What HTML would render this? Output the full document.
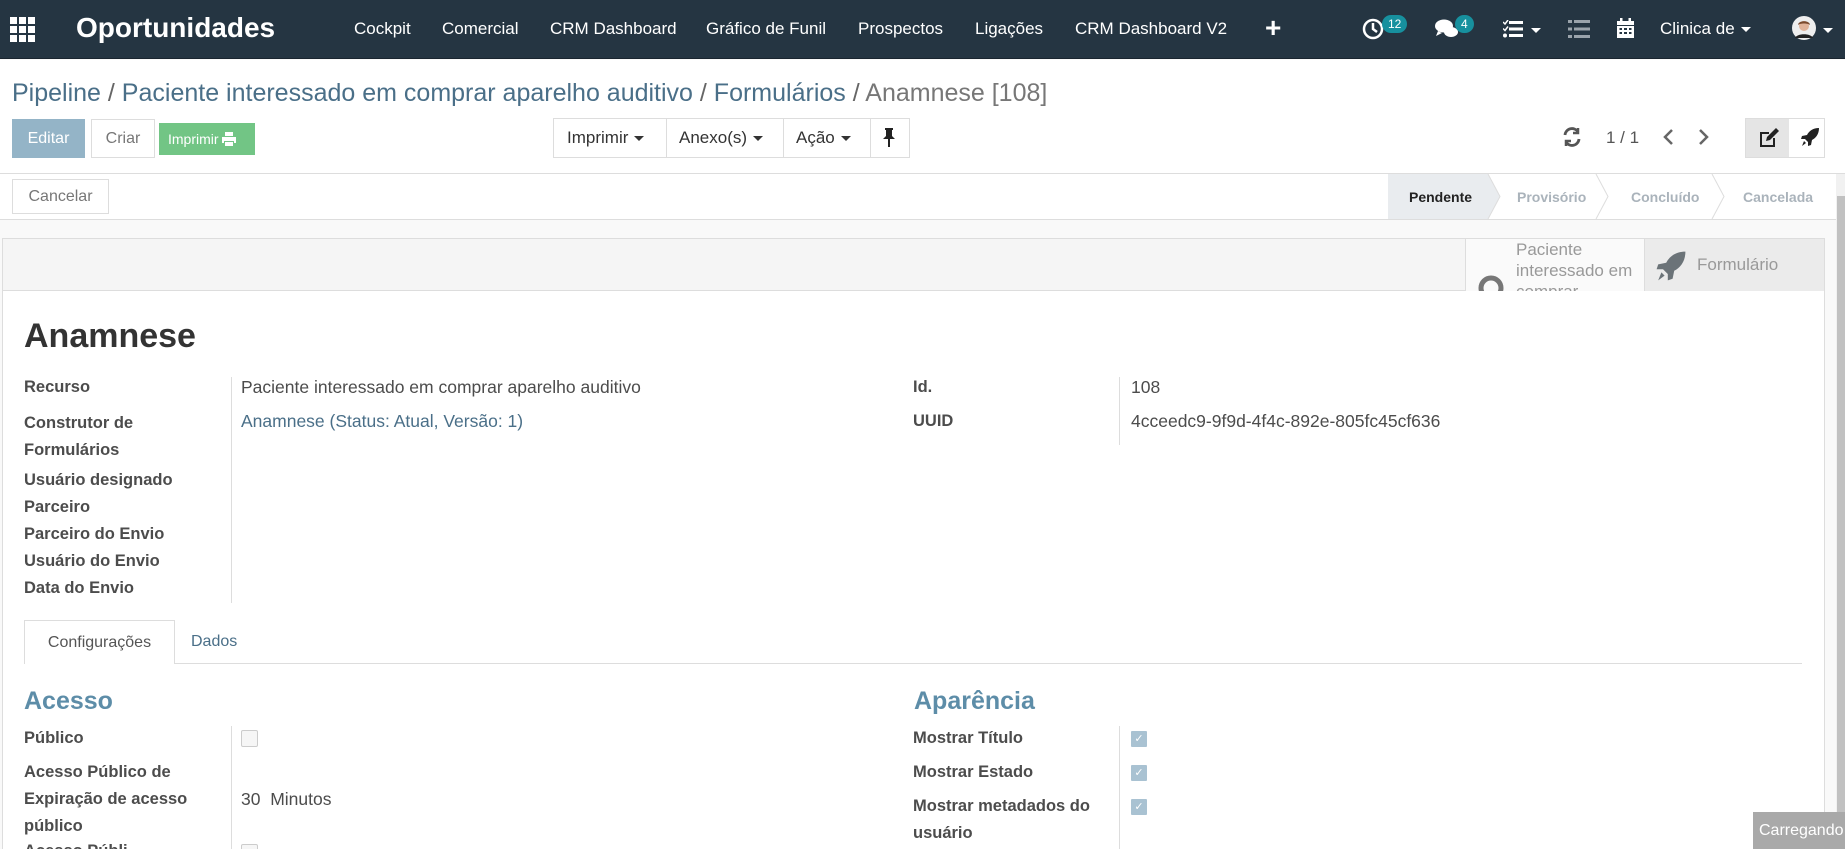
<!DOCTYPE html>
<html><head><meta charset="utf-8"><style>
*{box-sizing:border-box;margin:0;padding:0}
html{width:1845px;height:849px;overflow:hidden}
body{width:1845px;height:849px;overflow:hidden;background:#f9f9f9;font-family:"Liberation Sans",sans-serif;color:#4c4c4c;position:relative}
.a{position:absolute;white-space:nowrap}
.nav{position:absolute;left:0;top:0;width:1845px;height:59px;background:#253542;border-bottom:1px solid #1a252f}
.nav .m{position:absolute;top:19px;color:#fff;font-size:17px}
.badge{position:absolute;background:#17909e;color:#fff;font-size:12px;border-radius:9px;padding:2px 6px;line-height:14px}
.caret{display:inline-block;width:0;height:0;border-left:5px solid transparent;border-right:5px solid transparent;border-top:5px solid currentColor;vertical-align:middle;margin-left:6px}
.lbl{position:absolute;font-weight:bold;font-size:16.5px;color:#4c4c4c;white-space:nowrap}
.val{position:absolute;font-size:17.5px;color:#4c4c4c;white-space:nowrap}
.cb{position:absolute;width:17px;height:17px;border:1px solid #ccc;background:#f6f6f6;border-radius:2px}
.cbc{position:absolute;width:16px;height:16px;background:#a9c2d2;border-radius:1px;color:#fff;font-size:11px;text-align:center;line-height:16px}
</style></head><body>

<div class="nav">
  <svg class="a" style="left:10px;top:17px" width="25" height="25" viewBox="0 0 25 25" fill="#fff">
    <rect x="0" y="0" width="7" height="7"/><rect x="9" y="0" width="7" height="7"/><rect x="18" y="0" width="7" height="7"/>
    <rect x="0" y="9" width="7" height="7"/><rect x="9" y="9" width="7" height="7"/><rect x="18" y="9" width="7" height="7"/>
    <rect x="0" y="18" width="7" height="7"/><rect x="9" y="18" width="7" height="7"/><rect x="18" y="18" width="7" height="7"/>
  </svg>
  <div class="a" style="left:76px;top:12px;color:#fff;font-size:28px;font-weight:bold">Oportunidades</div>
  <div class="m" style="left:354px">Cockpit</div>
  <div class="m" style="left:442px">Comercial</div>
  <div class="m" style="left:550px">CRM Dashboard</div>
  <div class="m" style="left:706px">Gráfico de Funil</div>
  <div class="m" style="left:858px">Prospectos</div>
  <div class="m" style="left:975px">Ligações</div>
  <div class="m" style="left:1075px">CRM Dashboard V2</div>
  <div class="a" style="left:1265px;top:12px;color:#fff;font-size:28px;font-weight:bold">+</div>
  <svg class="a" style="left:1362px;top:18px" width="22" height="22" viewBox="0 0 22 22"><circle cx="11" cy="11" r="9" fill="none" stroke="#fff" stroke-width="2.5"/><path d="M11 5v6l4 3" stroke="#fff" stroke-width="2.5" fill="none"/></svg>
  <div class="badge" style="left:1382px;top:15px">12</div>
  <svg class="a" style="left:1434px;top:18px" width="26" height="22" viewBox="0 0 26 22" fill="#fff"><ellipse cx="10" cy="8" rx="9" ry="6.5"/><path d="M4 13l-2 5 6-3z"/><ellipse cx="17" cy="14" rx="7" ry="5"/></svg>
  <div class="badge" style="left:1455px;top:15px">4</div>
  <svg class="a" style="left:1503px;top:20px" width="20" height="18" viewBox="0 0 20 18" fill="#fff"><rect x="6" y="1" width="14" height="3"/><rect x="6" y="7.5" width="14" height="3"/><rect x="6" y="14" width="14" height="3"/><circle cx="2" cy="15.5" r="2"/><path d="M0 2l2 2 3-4" stroke="#fff" stroke-width="1.5" fill="none"/><path d="M0 8.5l2 2 3-4" stroke="#fff" stroke-width="1.5" fill="none"/></svg>
  <div class="a" style="left:1525px;top:22px;color:#fff"><span class="caret"></span></div>
  <svg class="a" style="left:1568px;top:19px" width="22" height="20" viewBox="0 0 22 20" fill="#9aa3ab"><rect x="0" y="1" width="4" height="3"/><rect x="6" y="1" width="16" height="3"/><rect x="0" y="8.5" width="4" height="3"/><rect x="6" y="8.5" width="16" height="3"/><rect x="0" y="16" width="4" height="3"/><rect x="6" y="16" width="16" height="3"/></svg>
  <svg class="a" style="left:1617px;top:18px" width="17" height="20" viewBox="0 0 17 20" fill="#fff"><rect x="3" y="0" width="2.5" height="4"/><rect x="11.5" y="0" width="2.5" height="4"/><rect x="0" y="3" width="17" height="4"/><path d="M0 8h17v12H0z M2.5 10v2h2.5v-2z M7 10v2h3v-2z M12 10v2h2.5v-2z M2.5 14v2h2.5v-2z M7 14v2h3v-2z M12 14v2h2.5v-2z" fill-rule="evenodd"/></svg>
  <div class="m" style="left:1660px">Clinica de<span class="caret"></span></div>
  <svg class="a" style="left:1792px;top:16px" width="24" height="24" viewBox="0 0 24 24"><circle cx="12" cy="12" r="12" fill="#eee"/><circle cx="12" cy="10" r="5" fill="#e0b39a"/><path d="M6 9c0-5 12-5 12 0-2-2-10-2-12 0z" fill="#7a4a2e"/><path d="M3 22c2-5 16-5 18 0" fill="#222"/></svg>
  <div class="a" style="left:1823px;top:22px;color:#fff"><span class="caret" style="margin-left:0"></span></div>
</div>

<div class="a" style="left:0;top:60px;width:1845px;height:114px;background:#fff;border-bottom:1px solid #ddd"></div>
<div class="a" style="left:12px;top:79px;font-size:25px;color:#4a6f88">Pipeline <span style="color:#666">/</span> Paciente interessado em comprar aparelho auditivo <span style="color:#666">/</span> Formulários <span style="color:#666">/</span> <span style="color:#777">Anamnese [108]</span></div>
<div class="a" style="left:12px;top:119px;width:73px;height:39px;background:#94b4c7;color:#fff;font-size:16px;line-height:39px;text-align:center">Editar</div>
<div class="a" style="left:91px;top:119px;width:64px;height:39px;background:#fff;border:1px solid #ddd;color:#777;font-size:16px;line-height:37px;text-align:center">Criar</div>
<div class="a" style="left:159px;top:123px;width:96px;height:32px;background:#72c585;color:#fff;font-size:14px;line-height:32px;padding-left:9px">Imprimir <svg style="vertical-align:-2px" width="14" height="14" viewBox="0 0 14 14" fill="#fff"><rect x="3" y="0" width="8" height="4"/><path d="M0 5h14v6h-2v-2H2v2H0z"/><rect x="3" y="10" width="8" height="4"/></svg></div>

<div class="a" style="left:553px;top:118px;width:357px;height:40px;background:#fff;border:1px solid #ddd"></div>
<div class="a" style="left:666px;top:118px;width:1px;height:40px;background:#ddd"></div>
<div class="a" style="left:783px;top:118px;width:1px;height:40px;background:#ddd"></div>
<div class="a" style="left:870px;top:118px;width:1px;height:40px;background:#ddd"></div>
<div class="a" style="left:567px;top:128px;font-size:17px;color:#333">Imprimir<span class="caret"></span></div>
<div class="a" style="left:679px;top:128px;font-size:17px;color:#333">Anexo(s)<span class="caret"></span></div>
<div class="a" style="left:796px;top:128px;font-size:17px;color:#333">Ação<span class="caret"></span></div>
<svg class="a" style="left:882px;top:128px" width="14" height="19" viewBox="0 0 14 19" fill="#222"><rect x="3" y="0" width="8" height="2"/><path d="M4 2h6v6l3 3H1l3-3z"/><rect x="6" y="11" width="2" height="8"/></svg>

<svg class="a" style="left:1562px;top:126px" width="20" height="22" viewBox="0 0 20 22" fill="none" stroke="#555" stroke-width="2.8"><path d="M3 9a7 7 0 0 1 13-3"/><path d="M17 13a7 7 0 0 1-13 3"/><path d="M16 2v5h-5" stroke-width="2.5"/><path d="M4 20v-5h5" stroke-width="2.5"/></svg>
<div class="a" style="left:1606px;top:128px;font-size:17px;color:#555">1 / 1</div>
<svg class="a" style="left:1662px;top:128px" width="12" height="18" viewBox="0 0 12 18" fill="none" stroke="#666" stroke-width="2.5"><path d="M10 2L3 9l7 7"/></svg>
<svg class="a" style="left:1698px;top:128px" width="12" height="18" viewBox="0 0 12 18" fill="none" stroke="#666" stroke-width="2.5"><path d="M2 2l7 7-7 7"/></svg>
<div class="a" style="left:1745px;top:118px;width:80px;height:40px;border:1px solid #ddd;background:#fff"></div>
<div class="a" style="left:1746px;top:119px;width:43px;height:38px;background:#e5e5e5"></div>
<svg class="a" style="left:1758px;top:127px" width="22" height="22" viewBox="0 0 22 22"><path d="M2 5h9v2H4v11h11v-7h2v9H2z" fill="#222"/><path d="M8 14l1-4 9-9 3 3-9 9z" fill="#222"/></svg>
<svg class="a" style="left:1800px;top:127px" width="20" height="20" viewBox="0 0 20 20" fill="#222"><path d="M19 1c-6 0-10 3-12 7l-5 1 -1 3 4 0 3 3 0 4 3-1 1-5c4-2 7-6 7-12z"/><path d="M4 14l2 2-4 3z"/></svg>

<div class="a" style="left:0;top:174px;width:1836px;height:46px;background:#fff;border-bottom:1px solid #ddd"></div>
<div class="a" style="left:12px;top:179px;width:97px;height:35px;border:1px solid #ddd;color:#777;font-size:16px;line-height:33px;text-align:center;background:#fff">Cancelar</div>
<svg class="a" style="left:1388px;top:174px" width="448" height="45" viewBox="0 0 448 45">
  <path d="M0 0H100L112 22.5L100 45H0z" fill="#e9ecef"/>
  <path d="M208 0l12 22.5L208 45" fill="none" stroke="#ddd"/>
  <path d="M324 0l12 22.5L324 45" fill="none" stroke="#ddd"/>
  <path d="M100 0l12 22.5L100 45" fill="none" stroke="#ddd"/>
</svg>
<div class="a" style="left:1409px;top:189px;font-size:14px;font-weight:bold;color:#222">Pendente</div>
<div class="a" style="left:1517px;top:189px;font-size:14px;font-weight:bold;color:#aab3bb">Provisório</div>
<div class="a" style="left:1631px;top:189px;font-size:14px;font-weight:bold;color:#aab3bb">Concluído</div>
<div class="a" style="left:1743px;top:189px;font-size:14px;font-weight:bold;color:#aab3bb">Cancelada</div>

<div class="a" style="left:1836px;top:174px;width:9px;height:675px;background:#f1f1f1"></div>
<div class="a" style="left:1837px;top:196px;width:8px;height:653px;background:#c1c1c1"></div>

<div class="a" style="left:2px;top:238px;width:1823px;height:611px;background:#fff;border:1px solid #ddd;border-bottom:none"></div>
<div class="a" style="left:3px;top:239px;width:1821px;height:52px;background:#f5f5f5;border-bottom:1px solid #ddd"></div>
<div class="a" style="left:1465px;top:239px;width:180px;height:52px;background:#fafafa;border-left:1px solid #ddd;overflow:hidden">
  <svg class="a" style="left:12px;top:36px" width="26" height="26" viewBox="0 0 26 26"><circle cx="13" cy="13" r="10" fill="none" stroke="#777" stroke-width="5"/></svg>
  <div class="a" style="left:50px;top:0px;font-size:17px;color:#999;line-height:21px">Paciente<br>interessado em<br>comprar</div>
</div>
<div class="a" style="left:1644px;top:239px;width:180px;height:52px;background:#ebebeb;border-left:1px solid #ddd">
  <svg class="a" style="left:10px;top:10px" width="32" height="34" viewBox="0 0 20 20" fill="#6b7378"><path d="M19 1c-6 0-10 3-12 7l-5 1 -1 3 4 0 3 3 0 4 3-1 1-5c4-2 7-6 7-12z"/><path d="M4 14l2 2-4 3z"/></svg>
  <div class="a" style="left:52px;top:16px;font-size:17px;color:#999">Formulário</div>
</div>

<div class="a" style="left:24px;top:317px;font-size:34px;font-weight:bold;color:#333">Anamnese</div>

<div class="a" style="left:231px;top:377px;width:1px;height:102px;background:#ddd"></div>
<div class="a" style="left:231px;top:469px;width:1px;height:134px;background:#ddd"></div>
<div class="a" style="left:1119px;top:377px;width:1px;height:68px;background:#ddd"></div>

<div class="lbl" style="left:24px;top:378px">Recurso</div>
<div class="val" style="left:241px;top:377px">Paciente interessado em comprar aparelho auditivo</div>
<div class="lbl" style="left:24px;top:410px;line-height:27px;white-space:normal;width:190px">Construtor de<br>Formulários</div>
<div class="val" style="left:241px;top:411px;color:#4a6f88">Anamnese (Status: Atual, Versão: 1)</div>
<div class="lbl" style="left:24px;top:471px">Usuário designado</div>
<div class="lbl" style="left:24px;top:498px">Parceiro</div>
<div class="lbl" style="left:24px;top:525px">Parceiro do Envio</div>
<div class="lbl" style="left:24px;top:552px">Usuário do Envio</div>
<div class="lbl" style="left:24px;top:579px">Data do Envio</div>

<div class="lbl" style="left:913px;top:378px">Id.</div>
<div class="val" style="left:1131px;top:377px">108</div>
<div class="lbl" style="left:913px;top:412px">UUID</div>
<div class="val" style="left:1131px;top:411px">4cceedc9-9f9d-4f4c-892e-805fc45cf636</div>

<div class="a" style="left:24px;top:663px;width:1778px;height:1px;background:#ddd"></div>
<div class="a" style="left:24px;top:620px;width:151px;height:44px;background:#fff;border:1px solid #ddd;border-bottom:none;font-size:16px;color:#555;text-align:center;line-height:43px">Configurações</div>
<div class="a" style="left:191px;top:633px;font-size:16px;color:#4a6f88">Dados</div>

<div class="a" style="left:24px;top:687px;font-size:25px;font-weight:bold;color:#5d8da8">Acesso</div>
<div class="a" style="left:914px;top:687px;font-size:25px;font-weight:bold;color:#5d8da8">Aparência</div>

<div class="a" style="left:231px;top:726px;width:1px;height:123px;background:#ddd"></div>
<div class="a" style="left:1119px;top:726px;width:1px;height:123px;background:#ddd"></div>

<div class="lbl" style="left:24px;top:729px">Público</div>
<div class="cb" style="left:241px;top:730px"></div>
<div class="lbl" style="left:24px;top:763px">Acesso Público de</div>
<div class="lbl" style="left:24px;top:790px">Expiração de acesso</div>
<div class="val" style="left:241px;top:789px">30&nbsp; Minutos</div>
<div class="lbl" style="left:24px;top:817px">público</div>
<div class="lbl" style="left:24px;top:842px">Acesso Públi</div>
<div class="cb" style="left:241px;top:844px"></div>

<div class="lbl" style="left:913px;top:729px">Mostrar Título</div>
<div class="cbc" style="left:1131px;top:731px">✓</div>
<div class="lbl" style="left:913px;top:763px">Mostrar Estado</div>
<div class="cbc" style="left:1131px;top:765px">✓</div>
<div class="lbl" style="left:913px;top:797px">Mostrar metadados do</div>
<div class="cbc" style="left:1131px;top:799px">✓</div>
<div class="lbl" style="left:913px;top:824px">usuário</div>

<div class="a" style="left:1753px;top:812px;width:92px;height:37px;background:#a9a9a9;color:#fff;font-size:16px;line-height:37px;padding-left:6px;overflow:hidden">Carregando</div>
</body></html>
